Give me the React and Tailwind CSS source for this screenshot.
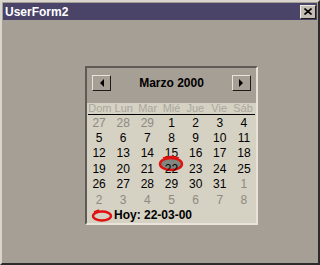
import React from "react";

const F = { fontFamily: '"Liberation Sans", Arial, sans-serif' };

const names = ["Dom", "Lun", "Mar", "Mié", "Jue", "Vie", "Sáb"];
const rows = [
  [[27, 0], [28, 0], [29, 0], [1, 1], [2, 1], [3, 1], [4, 1]],
  [[5, 1], [6, 1], [7, 1], [8, 1], [9, 1], [10, 1], [11, 1]],
  [[12, 1], [13, 1], [14, 1], [15, 1], [16, 1], [17, 1], [18, 1]],
  [[19, 1], [20, 1], [21, 1], [22, 2], [23, 1], [24, 1], [25, 1]],
  [[26, 1], [27, 1], [28, 1], [29, 1], [30, 1], [31, 1], [1, 0]],
  [[2, 0], [3, 0], [4, 0], [5, 0], [6, 0], [7, 0], [8, 0]],
];

function NavBtn({ dir }) {
  return (
    <div className="w-[19px] h-[16px] border border-t-[#e8e4dc] border-l-[#e8e4dc] border-r-[#1e1c1a] border-b-[#1e1c1a] bg-[#a69f96] flex items-center justify-center">
      <svg width="6" height="8" viewBox="0 0 6 8">
        {dir === "l" ? (
          <polygon points="5,0 5,8 1,4" fill="#000" />
        ) : (
          <polygon points="1,0 1,8 5,4" fill="#000" />
        )}
      </svg>
    </div>
  );
}

export default function App() {
  return (
    <div
      className="w-[320px] h-[265px] bg-[#a69f96] border-2 border-t-[#d9d5cd] border-l-[#d9d5cd] border-r-[#2e2c2a] border-b-[#2e2c2a] p-px flex flex-col"
      style={F}
    >
      <div className="h-[17px] bg-[#4a4469] flex items-center justify-between pl-[2px] pr-[1px]">
        <span className="text-white font-bold text-[12px] leading-none">UserForm2</span>
        <div className="w-[16px] h-[14px] bg-[#c3bdb3] border border-t-[#f0ece4] border-l-[#f0ece4] border-r-[#1e1c1a] border-b-[#1e1c1a] flex items-center justify-center">
          <svg width="8" height="7" viewBox="0 0 8 7">
            <path d="M0.5 0.5 L7.5 6.5 M7.5 0.5 L0.5 6.5" stroke="#000" strokeWidth="1.6" />
          </svg>
        </div>
      </div>
      <div className="flex-1 pl-[82px] pt-[46px]">
        <div className="w-[173px] border-2 border-t-[#5e5a55] border-l-[#5e5a55] border-r-[#e8e4dc] border-b-[#e8e4dc] bg-[#d5d1c3] flex flex-col">
          <div className="h-[35px] bg-[#a69f96] flex items-start justify-between px-[5px] pt-[7px]">
            <NavBtn dir="l" />
            <span className="font-bold text-[12px] leading-[16px] text-black">Marzo 2000</span>
            <NavBtn dir="r" />
          </div>
          <div className="mx-[1px] grid grid-cols-7 h-[12px] border-b border-black items-center">
            {names.map((n) => (
              <span key={n} className="text-center text-[11px] leading-none text-[#aaa69c]">{n}</span>
            ))}
          </div>
          <div className="flex flex-col">
            {rows.map((r, i) => (
              <div key={i} className="grid grid-cols-7 h-[15.4px] items-center">
                {r.map(([d, t], j) => (
                  <div key={j} className="relative flex justify-center items-center">
                    {t === 2 && (
                      <svg className="absolute left-[-1px] top-[-8px]" width="26" height="17" viewBox="0 0 26 17">
                        <ellipse cx="13" cy="9" rx="11" ry="6" fill="#80877f" stroke="#e01010" strokeWidth="2.4" />
                        <path d="M5 3 Q13 0 21 3" stroke="#e01010" strokeWidth="1.5" fill="none" />
                      </svg>
                    )}
                    <span className={`relative text-[12px] leading-none ${t === 0 ? "text-[#8e8a82]" : "text-black"}`}>{d}</span>
                  </div>
                ))}
              </div>
            ))}
          </div>
          <div className="flex items-center pl-[4px] h-[16px]">
            <svg width="22" height="14" viewBox="0 0 22 14">
              <path d="M3 4 L8 2" stroke="#e01010" strokeWidth="1.4" fill="none" />
              <ellipse cx="11" cy="8" rx="9" ry="4.5" fill="none" stroke="#e01010" strokeWidth="2.4" />
            </svg>
            <span className="font-bold text-[12px] text-black ml-[1px]">Hoy: 22-03-00</span>
          </div>
        </div>
      </div>
    </div>
  );
}
